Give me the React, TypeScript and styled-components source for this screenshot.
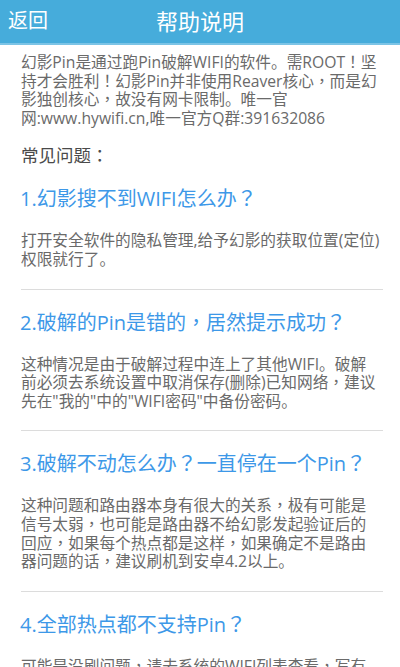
import React from "react";
import styled, { createGlobalStyle } from "styled-components";

const Global = createGlobalStyle`
  html, body { margin: 0; padding: 0; background: #ffffff; }
  body { font-family: "Open Sans", "Noto Sans CJK SC", "DejaVu Sans", sans-serif; }
  * { box-sizing: border-box; }
`;

const Page = styled.div`
  width: 400px;
  height: 667px;
  overflow: hidden;
  display: flex;
  flex-direction: column;
  background: #ffffff;
`;

const TopBar = styled.header`
  position: relative;
  height: 45px;
  flex: none;
  display: flex;
  align-items: center;
  justify-content: center;
  background: #46acdb;
  border-bottom: 2px solid #7cc4e6;
  color: #ffffff;
  font-family: "Noto Sans CJK SC", sans-serif;
`;

const BackButton = styled.span`
  position: absolute;
  left: 8px;
  top: 7px;
  font-size: 20px;
  line-height: 26px;
`;

const Title = styled.h1`
  margin: -4px 0 0;
  font-size: 22px;
  font-weight: normal;
  line-height: 28px;
`;

const Content = styled.main`
  padding: 8px 17px 0 21px;
`;

const Paragraph = styled.p<{ $inset?: number }>`
  margin: 0;
  padding-right: ${(p) => p.$inset ?? 0}px;
  font-size: 15.7px;
  line-height: 18.6px;
  color: #6a6a6a;
`;

const Heading = styled.h2`
  margin: 17px 0 0;
  font-size: 17.5px;
  line-height: 22px;
  font-weight: normal;
  color: #4a4a4a;
`;

const Section = styled.section<{ $last?: boolean }>`
  padding: 19px 0 20px;
  border-bottom: ${(p) => (p.$last ? "none" : "1px solid #dcdcdc")};
`;

const Question = styled.h3`
  margin: 0 0 19px -1px;
  font-size: 20px;
  line-height: 26px;
  font-weight: normal;
  color: #3d98e8;
  white-space: nowrap;
`;

const Punct = styled.span`
  font-family: "Noto Sans CJK TC", sans-serif;
`;

function withPunct(text: string) {
  return text.split(/([，！？：])/).map((part, i) =>
    /^[，！？：]$/.test(part) ? <Punct key={i}>{part}</Punct> : part
  );
}

const faqs = [
  {
    q: "1.幻影搜不到WIFI怎么办？",
    a: "打开安全软件的隐私管理,给予幻影的获取位置(定位)权限就行了。",
  },
  {
    q: "2.破解的Pin是错的，居然提示成功？",
    a: "这种情况是由于破解过程中连上了其他WIFI。破解前必须去系统设置中取消保存(删除)已知网络，建议先在\"我的\"中的\"WIFI密码\"中备份密码。",
  },
  {
    q: "3.破解不动怎么办？一直停在一个Pin？",
    a: "这种问题和路由器本身有很大的关系，极有可能是信号太弱，也可能是路由器不给幻影发起验证后的回应，如果每个热点都是这样，如果确定不是路由器问题的话，建议刷机到安卓4.2以上。",
  },
  {
    q: "4.全部热点都不支持Pin？",
    a: "可能是没刷问题，请去系统的WIFI列表查看，写有WPS的热点才可以破解。",
  },
];

export default function App() {
  return (
    <Page>
      <Global />
      <TopBar>
        <BackButton>返回</BackButton>
        <Title>帮助说明</Title>
      </TopBar>
      <Content>
        <Paragraph>
          {withPunct(
            "幻影Pin是通过跑Pin破解WIFI的软件。需ROOT！坚持才会胜利！幻影Pin并非使用Reaver核心，而是幻影独创核心，故没有网卡限制。唯一官网:www.hywifi.cn,唯一官方Q群:391632086"
          )}
        </Paragraph>
        <Heading>{withPunct("常见问题：")}</Heading>
        {faqs.map((f, i) => (
          <Section key={i} $last={i === faqs.length - 1}>
            <Question>{withPunct(f.q)}</Question>
            <Paragraph $inset={2}>{withPunct(f.a)}</Paragraph>
          </Section>
        ))}
      </Content>
    </Page>
  );
}
